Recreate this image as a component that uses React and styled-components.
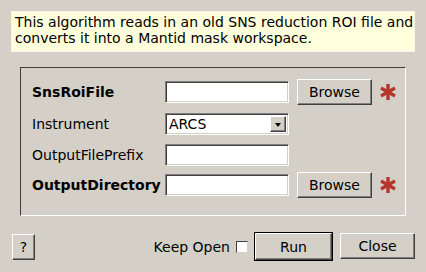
import React from 'react';
import styled, { createGlobalStyle } from 'styled-components';

const GlobalStyle = createGlobalStyle`
  html, body {
    margin: 0;
    padding: 0;
    background: #d4d0c8;
  }
  body {
    font-family: "DejaVu Sans", "Liberation Sans", sans-serif;
    font-size: 14px;
    color: #000;
  }
`;

const Dialog = styled.div`
  width: 426px;
  height: 272px;
  box-sizing: border-box;
  padding: 11px 11px 0 11px;
  display: flex;
  flex-direction: column;
`;

const Description = styled.div`
  background: #ffffdc;
  border: 1px solid #f4f4f0;
  padding: 2px 0 4px 3px;
  line-height: 16px;
  height: 41px;
  box-sizing: border-box;
  white-space: nowrap;
`;

const Group = styled.div`
  margin: 15px 9px 0 9px;
  border-top: 1px solid #404040;
  border-left: 1px solid #404040;
  border-right: 1px solid #fff;
  border-bottom: 1px solid #fff;
  padding: 11px 0 17px 11px;
  display: grid;
  grid-template-columns: 125px 124px 75px 20px;
  grid-template-rows: 26px 26px 23px 26px;
  column-gap: 8px;
  row-gap: 6px;
  align-items: center;
`;

const Label = styled.div`
  font-weight: ${(p) => (p.$bold ? 'bold' : 'normal')};
  white-space: nowrap;
`;

const sunken = `
  border-top: 1px solid #808080;
  border-left: 1px solid #808080;
  border-right: 1px solid #fff;
  border-bottom: 1px solid #fff;
  box-shadow: inset 1px 1px 0 #404040, inset -1px -1px 0 #d4d0c8;
`;

const Input = styled.div`
  ${sunken}
  background: #fff;
  height: 22px;
  box-sizing: border-box;
`;

const Combo = styled.div`
  ${sunken}
  background: #fff;
  height: 22px;
  box-sizing: border-box;
  display: flex;
  align-items: center;
  justify-content: space-between;
  padding: 0 2px 0 3px;
`;

const ArrowButton = styled.div`
  width: 16px;
  height: 16px;
  box-sizing: border-box;
  background: #d4d0c8;
  border-top: 1px solid #fff;
  border-left: 1px solid #fff;
  border-right: 1px solid #404040;
  border-bottom: 1px solid #404040;
  box-shadow: inset -1px -1px 0 #808080;
  display: flex;
  align-items: center;
  justify-content: center;
  &::after {
    content: '';
    border-left: 3px solid transparent;
    border-right: 3px solid transparent;
    border-top: 4px solid #000;
    margin-top: 1px;
  }
`;

const Button = styled.button`
  font-family: inherit;
  font-size: 14px;
  color: #000;
  background: #d4d0c8;
  box-sizing: border-box;
  width: ${(p) => p.$w}px;
  height: ${(p) => p.$h || 26}px;
  padding: 0;
  margin: 0;
  border-top: 1px solid #fff;
  border-left: 1px solid #fff;
  border-right: 1px solid #404040;
  border-bottom: 1px solid #404040;
  box-shadow: inset -1px -1px 0 #808080;
  outline: ${(p) => (p.$default ? '1px solid #000' : 'none')};
  outline-offset: 0;
  justify-self: start;
`;

const Star = styled.svg`
  margin-left: -1px;
`;

const Footer = styled.div`
  margin-top: 17px;
  padding-left: 1px;
  display: flex;
  align-items: center;
`;

const KeepOpen = styled.label`
  margin-left: auto;
  display: flex;
  align-items: center;
  gap: 6px;
`;

const CheckBox = styled.span`
  width: 12px;
  height: 12px;
  box-sizing: border-box;
  background: #fff;
  border-top: 1px solid #404040;
  border-left: 1px solid #404040;
  border-right: 1px solid #d4d0c8;
  border-bottom: 1px solid #d4d0c8;
`;

const FooterButtons = styled.div`
  display: flex;
  gap: 8px;
  margin-left: 7px;
`;

function Required() {
  return (
    <Star width="18" height="18" viewBox="0 0 18 18">
      <g stroke="#b3352b" strokeWidth="3.4" strokeLinecap="butt">
        <line x1="9" y1="1" x2="9" y2="17" />
        <line x1="2" y1="5" x2="16" y2="13" />
        <line x1="2" y1="13" x2="16" y2="5" />
      </g>
    </Star>
  );
}

export default function App() {
  return (
    <>
      <GlobalStyle />
      <Dialog>
        <Description>
          This algorithm reads in an old SNS reduction ROI file and
          <br />
          converts it into a Mantid mask workspace.
        </Description>
        <Group>
          <Label $bold>SnsRoiFile</Label>
          <Input />
          <Button $w={75}>Browse</Button>
          <Required />

          <Label>Instrument</Label>
          <Combo>
            <span>ARCS</span>
            <ArrowButton />
          </Combo>
          <span />
          <span />

          <Label>OutputFilePrefix</Label>
          <Input />
          <span />
          <span />

          <Label $bold>OutputDirectory</Label>
          <Input />
          <Button $w={75}>Browse</Button>
          <Required />
        </Group>
        <Footer>
          <Button $w={23}>?</Button>
          <KeepOpen>
            Keep Open
            <CheckBox />
          </KeepOpen>
          <FooterButtons>
            <Button $w={77} $h={27} $default>Run</Button>
            <Button $w={75}>Close</Button>
          </FooterButtons>
        </Footer>
      </Dialog>
    </>
  );
}
